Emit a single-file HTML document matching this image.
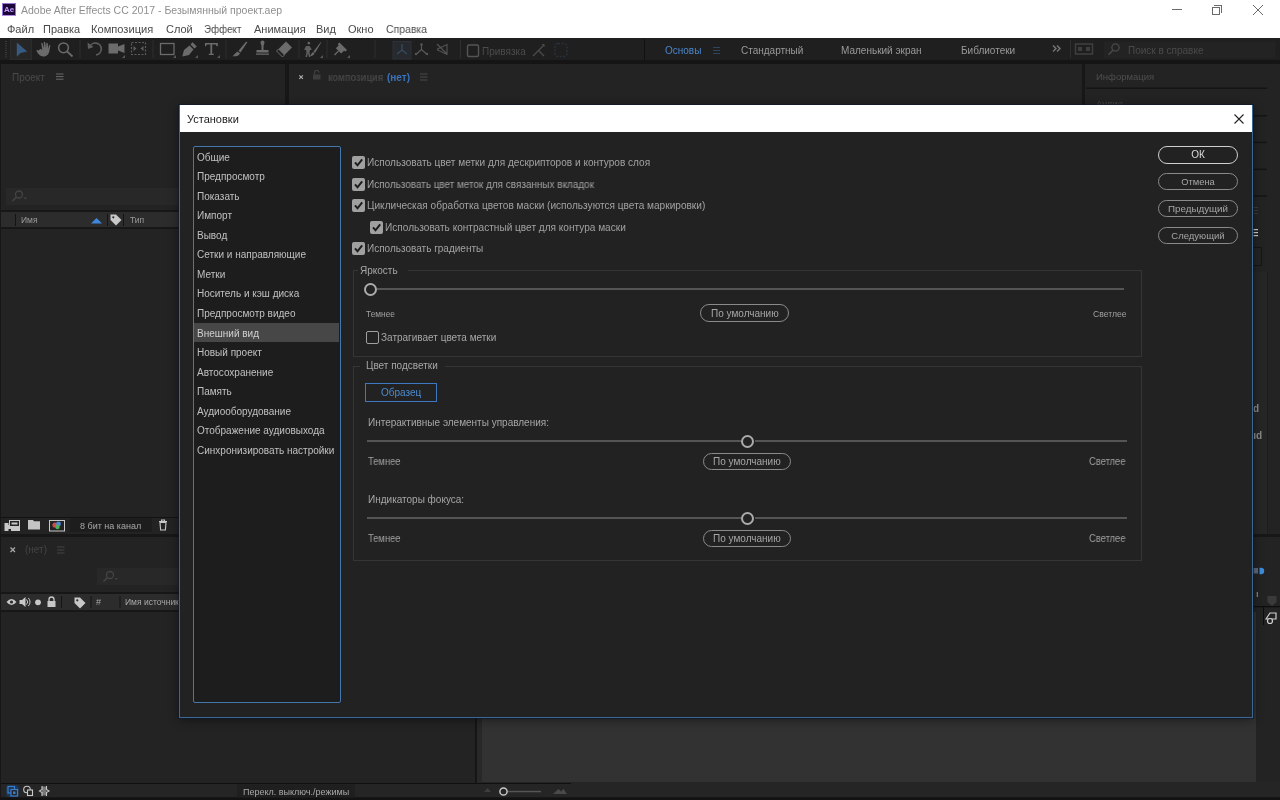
<!DOCTYPE html>
<html><head><meta charset="utf-8">
<style>
*{margin:0;padding:0;box-sizing:border-box}
html,body{width:1280px;height:800px;overflow:hidden;background:#171717;font-family:"Liberation Sans",sans-serif;font-size:10px;color:#a0a0a0;position:relative}
.a{position:absolute}
.t{position:absolute;white-space:nowrap;line-height:1;will-change:transform}
svg{position:absolute;overflow:visible}
</style></head><body>
<div class="a" style="left:0px;top:0px;width:1280px;height:38px;background:#fff;"></div>
<div class="a" style="left:2px;top:2.5px;width:13.5px;height:13.5px;background:#1c0838;border:1px solid #9a74d4;border-bottom:1.5px solid #b48ae8"></div>
<div class="t" style="left:4.3px;top:6.43px;font-size:8px;color:#c49cff;"><b>Ae</b></div>
<div class="t" style="left:21px;top:5.31px;font-size:10.5px;color:#8f8f8f;">Adobe After Effects CC 2017 - Безымянный проект.aep</div>
<div class="a" style="left:1172px;top:9px;width:10px;height:1px;background:#6a6a6a;"></div>
<div class="a" style="left:1212px;top:7px;width:8px;height:8px;background:transparent;border:1px solid #6a6a6a"></div>
<div class="a" style="left:1214px;top:5px;width:8px;height:8px;border-top:1px solid #6a6a6a;border-right:1px solid #6a6a6a"></div>
<svg style="left:1253px;top:5px" width="10" height="10"><path d="M0 0L10 10M10 0L0 10" stroke="#6a6a6a" stroke-width="1"/></svg>
<div class="t" style="left:7px;top:24.09px;font-size:11px;color:#4a4a4a;transform:scaleX(1);transform-origin:0 0">Файл</div>
<div class="t" style="left:43px;top:24.09px;font-size:11px;color:#4a4a4a;transform:scaleX(1);transform-origin:0 0">Правка</div>
<div class="t" style="left:91px;top:24.09px;font-size:11px;color:#4a4a4a;transform:scaleX(1.01);transform-origin:0 0">Композиция</div>
<div class="t" style="left:166px;top:24.09px;font-size:11px;color:#4a4a4a;transform:scaleX(1);transform-origin:0 0">Слой</div>
<div class="t" style="left:203.7px;top:24.09px;font-size:11px;color:#4a4a4a;transform:scaleX(0.89);transform-origin:0 0">Эффект</div>
<div class="t" style="left:254px;top:24.09px;font-size:11px;color:#4a4a4a;transform:scaleX(1);transform-origin:0 0">Анимация</div>
<div class="t" style="left:316px;top:24.09px;font-size:11px;color:#4a4a4a;transform:scaleX(1);transform-origin:0 0">Вид</div>
<div class="t" style="left:348px;top:24.09px;font-size:11px;color:#4a4a4a;transform:scaleX(1);transform-origin:0 0">Окно</div>
<div class="t" style="left:386px;top:24.09px;font-size:11px;color:#4a4a4a;transform:scaleX(0.95);transform-origin:0 0">Справка</div>
<div class="a" style="left:0px;top:38px;width:1280px;height:22px;background:#1f1f1f;"></div>
<div class="a" style="left:0px;top:60px;width:1280px;height:4px;background:#151515;"></div>
<div class="a" style="left:1px;top:64px;width:284px;height:453px;background:#232323;"></div>
<div class="a" style="left:289px;top:64px;width:793px;height:470px;background:#232323;"></div>
<div class="a" style="left:1085px;top:64px;width:195px;height:470px;background:#232323;"></div>
<div class="a" style="left:1px;top:517px;width:284px;height:1px;background:#111;"></div>
<div class="a" style="left:1px;top:518px;width:284px;height:16px;background:#232323;"></div>
<div class="a" style="left:1px;top:537px;width:1279px;height:246px;background:#232323;"></div>
<div class="a" style="left:1px;top:783px;width:570px;height:1px;background:#111;"></div>
<div class="a" style="left:1px;top:784px;width:1279px;height:13px;background:#252525;"></div>
<div class="a" style="left:571px;top:782px;width:709px;height:2px;background:#252525;"></div>
<div class="t" style="left:11.7px;top:72.53px;font-size:10px;color:#4a4a4a;">Проект</div>
<svg style="left:0;top:0" width="1280" height="800"><rect x="5" y="41.0" width="2" height="1" fill="#3a3a3a"/><rect x="5" y="43.2" width="2" height="1" fill="#3a3a3a"/><rect x="5" y="45.4" width="2" height="1" fill="#3a3a3a"/><rect x="5" y="47.6" width="2" height="1" fill="#3a3a3a"/><rect x="5" y="49.8" width="2" height="1" fill="#3a3a3a"/><rect x="5" y="52.0" width="2" height="1" fill="#3a3a3a"/><rect x="5" y="54.2" width="2" height="1" fill="#3a3a3a"/><rect x="5" y="56.4" width="2" height="1" fill="#3a3a3a"/><rect x="10.5" y="39.5" width="21" height="20" fill="#262626" stroke="#2c2c2c" stroke-width="1"/><path d="M16.8 42.5L16.8 56.8L20.5 53L27.2 51.6Z" fill="#365a80" stroke="none" stroke-width="1" /><path d="M38.5 50.5C37.5 49.5 36.2 49.8 36.6 51C37.8 53.5 40 56.5 43.5 56.5C47 56.5 49 54 49.5 50.5L50.3 46C50.5 45 49.4 44.8 49 45.6L48.2 48.8L47.8 43.5C47.7 42.5 46.4 42.5 46.3 43.5L46 48.3L45.2 42.3C45 41.3 43.7 41.5 43.8 42.5L44 48.3L42.6 43.3C42.3 42.4 41 42.6 41.3 43.6L42.3 50L40.5 48.8Z" fill="#6b6b6b" stroke="none" stroke-width="1" /><circle cx="63.5" cy="47.8" r="4.9" fill="none" stroke="#6b6b6b" stroke-width="1.5"/><path d="M67 51.3L72.5 56.5" fill="none" stroke="#6b6b6b" stroke-width="1.8" /><rect x="79.5" y="40" width="1" height="18" fill="#2e2e2e"/><path d="M89.5 47.5A6 6 0 1 1 96 55" fill="none" stroke="#5e5e5e" stroke-width="1.6" /><path d="M87.5 42.5L88 49L93.5 47Z" fill="#5e5e5e" stroke="none" stroke-width="1" /><path d="M108.5 43.5h9.5v10h-9.5z" fill="#6b6b6b" stroke="none" stroke-width="1" /><path d="M118 46.5L124.5 44V53L118 50.5Z" fill="#6b6b6b" stroke="none" stroke-width="1" /><path d="M122 58L125 58L125 55Z" fill="#5a5a5a" stroke="none" stroke-width="1" /><rect x="131.5" y="42.5" width="14" height="12" fill="none" stroke="#5e5e5e" stroke-width="1.2" stroke-dasharray="2 1.5"/><path d="M133.5 46v5l3-2.5z M143.5 46v5l-3-2.5z" fill="#5e5e5e" stroke="none" stroke-width="1" /><rect x="152.5" y="40" width="1" height="18" fill="#2e2e2e"/><rect x="160.5" y="43.5" width="13.5" height="11" fill="none" stroke="#6b6b6b" stroke-width="1.3"/><path d="M173 58L176 58L176 55Z" fill="#5a5a5a" stroke="none" stroke-width="1" /><path d="M182.5 55.5L184 50L189.5 45.5L193.5 49.5L189 55L182.5 56.5Z M190.5 44.5L192.5 42.3L196.8 46.5L194.5 48.5Z" fill="#6b6b6b" stroke="none" stroke-width="1" /><path d="M195 58L198 58L198 55Z" fill="#5a5a5a" stroke="none" stroke-width="1" /><path d="M205 43h12.8v3.2h-1.2l-.8-1.7h-3.6v9.2h1.6v1.2h-5v-1.2h1.6v-9.2h-3.6l-.8 1.7H205z" fill="#6b6b6b" stroke="none" stroke-width="1" /><path d="M217 58L220 58L220 55Z" fill="#5a5a5a" stroke="none" stroke-width="1" /><rect x="225.5" y="40" width="1" height="18" fill="#2e2e2e"/><path d="M247.5 42L246 41.8L238.5 50.8L240.5 52.5Z M237.8 51.5L240 53.5C239 56 236 56.5 232.5 56.2C234.5 55 235.3 52.5 237.8 51.5Z" fill="#6b6b6b" stroke="none" stroke-width="1" /><path d="M260.5 42.5a2 2 0 0 1 4 0c0 1.5 -1 2 -1 4v3.5h5v2.5h-12v-2.5h5v-3.5c0-2 -1-2.5 -1-4z M256 53.5h13v1.2h-13z" fill="#6b6b6b" stroke="none" stroke-width="1" /><path d="M286 41.5L292 47.5L284.5 55L278.5 49Z" fill="#6b6b6b" stroke="none" stroke-width="1" /><path d="M278.5 49L284.5 55L282.5 57L276.5 51Z" fill="none" stroke="#6b6b6b" stroke-width="1" /><rect x="298.5" y="40" width="1" height="18" fill="#2e2e2e"/><path d="M307.5 43a1.3 1.3 0 1 1 0 .1z" fill="#6b6b6b" stroke="none" stroke-width="1" /><path d="M306 46h3.5l2 3v1h-1.5l-.5 2l1 5h-1.5l-1-4l-1 4h-1.5l1-5l-.5-2h-1.5v-1z" fill="#5e5e5e" stroke="none" stroke-width="1" /><path d="M321.5 42L320.5 42.5L313.5 51.5L315 53Z M313 52L314.5 53.5C313.5 55.5 311.8 56 310 56C311 55 311.5 53 313 52Z" fill="#6b6b6b" stroke="none" stroke-width="1" /><path d="M320 58L323 58L323 55Z" fill="#5a5a5a" stroke="none" stroke-width="1" /><rect x="326.5" y="40" width="1" height="18" fill="#2e2e2e"/><path d="M339.5 42.5L347 50L345.5 51.5L344 50.8L341.2 53.6L335.8 48.2L338.6 45.4L337.9 43.9Z" fill="#6b6b6b" stroke="none" stroke-width="1" /><path d="M338.5 51L334.5 55" fill="none" stroke="#6b6b6b" stroke-width="1.3" /><path d="M347 58L350 58L350 55Z" fill="#5a5a5a" stroke="none" stroke-width="1" /><rect x="374.5" y="40" width="1" height="18" fill="#2e2e2e"/><rect x="393" y="41.5" width="18" height="17.5" fill="#262a2f" stroke="#2d3138" stroke-width="1"/><path d="M402 44v6M402 50l-5 4M402 50l5 4" fill="none" stroke="#3a4a60" stroke-width="1.3" /><path d="M421.5 44.5v5M421.5 49.5l-5 4.5M421.5 49.5l5 4.5" fill="none" stroke="#585858" stroke-width="1.2" /><circle cx="421.5" cy="44.5" r="1.2" fill="#585858"/><circle cx="416" cy="54" r="1.2" fill="#585858"/><circle cx="427" cy="54" r="1.2" fill="#585858"/><path d="M437.5 49L447 44.5V54.5L437.5 50Z M437 44L447 54" fill="none" stroke="#555" stroke-width="1.1" /><rect x="460" y="40" width="1" height="18" fill="#2e2e2e"/><rect x="467.5" y="45" width="11" height="11.5" rx="1.5" fill="none" stroke="#555" stroke-width="1.4"/><path d="M533 56L538.5 50.5L544 56 M537.5 51.5L544 45" fill="none" stroke="#4a4a4a" stroke-width="1.4" /><path d="M541.5 44L544.5 44L544.5 47Z" fill="#4a4a4a" stroke="none" stroke-width="1" /><rect x="555" y="43.5" width="12" height="13" rx="3" fill="none" stroke="#28323d" stroke-width="1.5" stroke-dasharray="2 1.5"/><rect x="644" y="39" width="1" height="22" fill="#121212"/><path d="M1053 45.5l3 3-3 3M1057 45.5l3 3-3 3" fill="none" stroke="#777" stroke-width="1.4" /><rect x="1070" y="40" width="1" height="18" fill="#2e2e2e"/><rect x="1075.5" y="44" width="17" height="10" fill="none" stroke="#3e3e3e" stroke-width="1.6"/><rect x="1078" y="47" width="4" height="4" fill="#3e3e3e"/><rect x="1086" y="47" width="4" height="4" fill="#3e3e3e"/><rect x="1104" y="41.5" width="171.5" height="16.5" fill="#232323"/><circle cx="1115.5" cy="47.5" r="3.6" fill="none" stroke="#4a4a4a" stroke-width="1.3"/><path d="M1113 50.3L1108.5 54.8" fill="none" stroke="#4a4a4a" stroke-width="1.5" /><rect x="56" y="73.5" width="7.5" height="1" fill="#6a6a6a"/><rect x="56" y="76.1" width="7.5" height="1" fill="#6a6a6a"/><rect x="56" y="78.7" width="7.5" height="1" fill="#6a6a6a"/><rect x="6" y="188" width="279" height="17" fill="#282828"/><circle cx="19" cy="194.5" r="3.5" fill="none" stroke="#444" stroke-width="1.3"/><path d="M16.5 197L12.5 201" fill="none" stroke="#444" stroke-width="1.5" /><path d="M23.5 197.5h3.5l-1.75 2z" fill="#444" stroke="none" stroke-width="1" /><rect x="1" y="210" width="284" height="2" fill="#171717"/><rect x="1" y="212" width="284" height="15" fill="#2c2c2c"/><rect x="1" y="227" width="284" height="2" fill="#171717"/><rect x="15" y="214" width="1" height="12" fill="#141414"/><rect x="107" y="214" width="1" height="12" fill="#141414"/><rect x="123" y="214" width="1" height="12" fill="#141414"/><path d="M91 223.5L96.5 218L102 223.5Z" fill="#3d88dc" stroke="none" stroke-width="1" /><path d="M110.5 214.5h5.5l5.5 5.5-5.5 5.5-5.5-5.5z" fill="#c8c8c8" stroke="none" stroke-width="1" /><circle cx="113.3" cy="217.3" r="1.1" fill="#2c2c2c"/><rect x="1" y="517" width="284" height="1" fill="#131313"/><rect x="1" y="534" width="1279" height="3" fill="#171717"/><path d="M4.5 523h4v8h-4z M6 525h14v6h-9v-2h-5z" fill="#c8c8c8" stroke="none" stroke-width="1" /><rect x="9.5" y="520.5" width="10" height="6" fill="#232323" stroke="#c8c8c8" stroke-width="1"/><rect x="11.5" y="522.5" width="6" height="2" fill="#c8c8c8"/><path d="M28 520h5l1 1.3h6v8.2H28z" fill="#c4c4c4" stroke="none" stroke-width="1" /><rect x="49.5" y="520.5" width="15" height="10.5" fill="#222" stroke="#c8c8c8" stroke-width="1"/><circle cx="55" cy="525" r="2.6" fill="#d34a4a"/><circle cx="58.5" cy="524" r="2.4" fill="#4a8ad4"/><circle cx="57.5" cy="527" r="2.2" fill="#4ab05a"/><rect x="70" y="518.5" width="82" height="13.5" fill="#1d1d1d"/><path d="M159 521.5h8M161.5 521.5v-1.5h3v1.5M160 522.5h6l-.6 7.5h-4.8z" fill="none" stroke="#c8c8c8" stroke-width="1.1" /><path d="M299.3 75.3l3.6 3.6M302.9 75.3l-3.6 3.6" fill="none" stroke="#b0b0b0" stroke-width="1.1" /><rect x="313" y="74.5" width="7.5" height="5" fill="#3d3d3d"/><path d="M314.5 74.5v-2a2.2 2.2 0 0 1 4.4 0" fill="none" stroke="#3d3d3d" stroke-width="1.3" /><rect x="420" y="73.5" width="7.5" height="1" fill="#4a4a4a"/><rect x="420" y="76.5" width="7.5" height="1" fill="#4a4a4a"/><rect x="420" y="79.5" width="7.5" height="1" fill="#4a4a4a"/><rect x="1086" y="87.5" width="181" height="1.5" fill="#141414"/><rect x="1253" y="115" width="14" height="1.5" fill="#141414"/><rect x="1253" y="141.7" width="14" height="1.5" fill="#141414"/><rect x="1253" y="168.6" width="14" height="1.5" fill="#141414"/><rect x="1253" y="195.3" width="14" height="1.5" fill="#141414"/><rect x="1253" y="207" width="5" height="1" fill="#3a3a3a"/><rect x="1253" y="210" width="5" height="1" fill="#3a3a3a"/><rect x="1253" y="213" width="5" height="1" fill="#3a3a3a"/><rect x="1253" y="229" width="5" height="1.2" fill="#cfcfcf"/><rect x="1253" y="232" width="5" height="1.2" fill="#cfcfcf"/><rect x="1253" y="235" width="5" height="1.2" fill="#cfcfcf"/><rect x="1252.5" y="247.5" width="9" height="18" fill="none" stroke="#151515" stroke-width="1"/><rect x="1253" y="272" width="14" height="262" fill="#262626"/><rect x="1267" y="272" width="1" height="262" fill="#1c1c1c"/><path d="M10.5 547.5l4.5 4.5M15 547.5l-4.5 4.5" fill="none" stroke="#a8a8a8" stroke-width="1.3" /><rect x="57" y="546.5" width="7.5" height="1" fill="#444"/><rect x="57" y="549.5" width="7.5" height="1" fill="#444"/><rect x="57" y="552.5" width="7.5" height="1" fill="#444"/><rect x="97" y="568" width="382" height="17" fill="#282828"/><circle cx="110" cy="575" r="3.5" fill="none" stroke="#444" stroke-width="1.3"/><path d="M107.5 577.5L103.5 581.5" fill="none" stroke="#444" stroke-width="1.5" /><path d="M114.5 578h3.5l-1.75 2z" fill="#444" stroke="none" stroke-width="1" /><rect x="1" y="592" width="474" height="2" fill="#171717"/><rect x="1" y="594" width="474" height="16" fill="#2c2c2c"/><rect x="1" y="610" width="474" height="2" fill="#171717"/><rect x="61" y="596" width="1" height="12" fill="#141414"/><rect x="90.5" y="596" width="1" height="12" fill="#141414"/><rect x="119.5" y="596" width="1" height="12" fill="#141414"/><path d="M6.5 602Q11.5 596 16.5 602Q11.5 608 6.5 602Z" fill="#c8c8c8" stroke="none" stroke-width="1" /><circle cx="11.5" cy="602" r="1.6" fill="#2c2c2c"/><path d="M19.5 600h2.5l3.5-3v10l-3.5-3h-2.5z" fill="#c8c8c8" stroke="none" stroke-width="1" /><path d="M26.5 599.5a3.5 3.5 0 0 1 0 5M28.3 598a5.5 5.5 0 0 1 0 8" fill="none" stroke="#c8c8c8" stroke-width="1" /><circle cx="38" cy="602.3" r="2.9" fill="#c8c8c8"/><rect x="47.5" y="601" width="8" height="6" fill="#c8c8c8"/><path d="M49 601v-1.5a2.5 2.5 0 0 1 5 0v1.5" fill="none" stroke="#c8c8c8" stroke-width="1.3" /><path d="M74.5 597.5h5.5l5.5 5.5-5.5 5.5-5.5-5.5z" fill="#c8c8c8" stroke="none" stroke-width="1" /><circle cx="77.3" cy="600.3" r="1.1" fill="#2c2c2c"/><rect x="475" y="612" width="2" height="171" fill="#161616"/><rect x="477" y="612" width="5" height="171" fill="#282828"/><rect x="482" y="612" width="774" height="170" fill="#323232"/><rect x="1" y="783" width="570" height="1" fill="#101010"/><rect x="0" y="798" width="1280" height="2" fill="#121212"/><rect x="6" y="785" width="13" height="12" rx="3" fill="#1f3550"/><rect x="8" y="786.5" width="6.5" height="6.5" fill="none" stroke="#3a7ccc" stroke-width="1.2"/><rect x="11" y="789.5" width="6.5" height="6.5" fill="#252525" stroke="#3a7ccc" stroke-width="1.2"/><rect x="13" y="791.5" width="2.5" height="2.5" fill="#3a7ccc"/><circle cx="27" cy="789.5" r="3.3" fill="none" stroke="#c8c8c8" stroke-width="1.1"/><rect x="27.5" y="790" width="5" height="5.5" fill="#252525" stroke="#c8c8c8" stroke-width="1.1"/><rect x="42" y="786.5" width="4.5" height="9" fill="#777"/><path d="M42 786v3.5l-2.5 1.5 2.5 1.5v3.5M46.5 786v3.5l2.5 1.5-2.5 1.5v3.5" fill="none" stroke="#c8c8c8" stroke-width="1.1" /><rect x="237" y="784.5" width="118" height="13" fill="#1f1f1f"/><path d="M484 792l3.5-4 3.5 4z" fill="#3e3e3e" stroke="none" stroke-width="1" /><circle cx="503.5" cy="791.5" r="3.6" fill="none" stroke="#c8c8c8" stroke-width="1.5"/><rect x="508" y="790.8" width="33" height="1.5" fill="#555"/><path d="M553 794l5.5-5 2.5 2.5 2.5-2.5 3.5 5z" fill="#4a4a4a" stroke="none" stroke-width="1" /><rect x="1253" y="568" width="5" height="5.5" fill="#5a6a80"/><path d="M1259.5 567.8h1.5a3.2 3.2 0 0 1 0 6.4h-1.5z" fill="#3b8de0" stroke="none" stroke-width="1" /><rect x="1256.8" y="592" width="0.8" height="5" fill="#bbb"/><path d="M1267.5 596h9v6l-4.5 4-4.5-4z" fill="#3a3a3a" stroke="none" stroke-width="1" /><rect x="1253" y="606" width="27" height="1.3" fill="#0e0e0e"/><rect x="1263" y="607" width="1" height="18" fill="#0e0e0e"/><path d="M1266 619l4-6h6v6z" fill="none" stroke="#d0d0d0" stroke-width="1.2" /><circle cx="1270" cy="621" r="2.5" fill="#232323" stroke="#d0d0d0" stroke-width="1.2"/></svg>
<div class="t" style="left:482px;top:46.73px;font-size:10px;color:#4c4c4c;">Привязка</div>
<div class="t" style="left:665px;top:45.94px;font-size:10px;color:#4a86cc;">Основы</div>
<div class="a" style="left:713px;top:47px;width:7px;height:1px;background:#2e4560;"></div>
<div class="a" style="left:713px;top:50px;width:7px;height:1px;background:#2e4560;"></div>
<div class="a" style="left:713px;top:53px;width:7px;height:1px;background:#2e4560;"></div>
<div class="t" style="left:741px;top:45.94px;font-size:10px;color:#9a9a9a;">Стандартный</div>
<div class="t" style="left:841px;top:45.94px;font-size:10px;color:#9a9a9a;">Маленький экран</div>
<div class="t" style="left:961px;top:45.94px;font-size:10px;color:#9a9a9a;">Библиотеки</div>
<div class="t" style="left:1128px;top:45.94px;font-size:10px;color:#4a4a4a;">Поиск в справке</div>
<div class="t" style="left:1096px;top:71.66px;font-size:9.5px;color:#4e4e4e;">Информация</div>
<div class="t" style="left:1096px;top:98.96px;font-size:9.5px;color:#4a4a4a;">Аудио</div>
<div class="t" style="left:20.5px;top:215.70px;font-size:8.5px;color:#9a9a9a;">Имя</div>
<div class="t" style="left:130px;top:215.70px;font-size:8.5px;color:#9a9a9a;">Тип</div>
<div class="t" style="left:327.5px;top:72.53px;font-size:10px;color:#454545;transform:scaleX(0.925);transform-origin:0 0"><b>композиция</b></div>
<div class="t" style="left:387px;top:72.53px;font-size:10px;color:#3a72b8;"><b>(нет)</b></div>
<div class="t" style="left:80px;top:521.58px;font-size:9px;color:#a8a8a8;">8 бит на канал</div>
<div class="t" style="left:24.6px;top:545.13px;font-size:10px;color:#444;">(нет)</div>
<div class="t" style="left:96px;top:597.98px;font-size:9px;color:#a8a8a8;">#</div>
<div class="t" style="left:124.9px;top:597.90px;font-size:8.5px;color:#a8a8a8;">Имя источника</div>
<div class="t" style="left:243px;top:788.18px;font-size:9px;color:#a8a8a8;">Перекл. выключ./режимы</div>
<div class="t" style="left:1253px;top:403.54px;font-size:10px;color:#8a8a8a;"><b>d</b></div>
<div class="t" style="left:1249.5px;top:430.54px;font-size:10px;color:#8a8a8a;"><b>ud</b></div>
<div class="a" style="left:179px;top:105px;width:1074px;height:613px;border:1px solid #3a6794;border-top:none;background:#222222;box-shadow:0 0 0 1px rgba(10,25,45,0.6),0 2px 10px rgba(0,0,0,0.45)"></div>
<div class="a" style="left:180px;top:105px;width:1072px;height:27px;background:#ffffff"></div>
<div class="t" style="left:187px;top:113.69px;font-size:11px;color:#1a1a1a;">Установки</div>
<svg class="a" style="left:1233.5px;top:113.5px" width="10" height="10"><path d="M0.5 0.5L9.5 9.5M9.5 0.5L0.5 9.5" stroke="#222" stroke-width="1.1"/></svg>
<div class="a" style="left:193px;top:146px;width:148px;height:557px;border:1px solid #4477ae;border-radius:2px;background:#1d1d1d"></div>
<div class="a" style="left:194px;top:323px;width:145px;height:19px;background:#474747"></div>
<div class="t" style="left:196.8px;top:152.53px;font-size:10px;color:#c0c0c0;">Общие</div>
<div class="t" style="left:196.8px;top:172.09px;font-size:10px;color:#c0c0c0;">Предпросмотр</div>
<div class="t" style="left:196.8px;top:191.66px;font-size:10px;color:#c0c0c0;">Показать</div>
<div class="t" style="left:196.8px;top:211.22px;font-size:10px;color:#c0c0c0;">Импорт</div>
<div class="t" style="left:196.8px;top:230.78px;font-size:10px;color:#c0c0c0;">Вывод</div>
<div class="t" style="left:196.8px;top:250.34px;font-size:10px;color:#c0c0c0;">Сетки и направляющие</div>
<div class="t" style="left:196.8px;top:269.90px;font-size:10px;color:#c0c0c0;">Метки</div>
<div class="t" style="left:196.8px;top:289.45px;font-size:10px;color:#c0c0c0;">Носитель и кэш диска</div>
<div class="t" style="left:196.8px;top:309.02px;font-size:10px;color:#c0c0c0;">Предпросмотр видео</div>
<div class="t" style="left:196.8px;top:328.57px;font-size:10px;color:#d0d0d0;">Внешний вид</div>
<div class="t" style="left:196.8px;top:348.14px;font-size:10px;color:#c0c0c0;">Новый проект</div>
<div class="t" style="left:196.8px;top:367.69px;font-size:10px;color:#c0c0c0;">Автосохранение</div>
<div class="t" style="left:196.8px;top:387.25px;font-size:10px;color:#c0c0c0;">Память</div>
<div class="t" style="left:196.8px;top:406.81px;font-size:10px;color:#c0c0c0;">Аудиооборудование</div>
<div class="t" style="left:196.8px;top:426.38px;font-size:10px;color:#c0c0c0;">Отображение аудиовыхода</div>
<div class="t" style="left:196.8px;top:445.94px;font-size:10px;color:#c0c0c0;">Синхронизировать настройки</div>
<div class="a" style="left:352px;top:156px;width:13px;height:13px;border-radius:2px;background:#a0a0a0"></div>
<svg class="a" style="left:352px;top:156px" width="13" height="13"><path d="M3 6.4L5.5 9.3L10.2 3.4" fill="none" stroke="#1c1c1c" stroke-width="2"/></svg>
<div class="t" style="left:366.7px;top:158.03px;font-size:10px;color:#a2a2a2;transform:scaleX(1.007);transform-origin:0 0">Использовать цвет метки для дескрипторов и контуров слоя</div>
<div class="a" style="left:352px;top:177.7px;width:13px;height:13px;border-radius:2px;background:#a0a0a0"></div>
<svg class="a" style="left:352px;top:177.7px" width="13" height="13"><path d="M3 6.4L5.5 9.3L10.2 3.4" fill="none" stroke="#1c1c1c" stroke-width="2"/></svg>
<div class="t" style="left:366.7px;top:179.63px;font-size:10px;color:#a2a2a2;transform:scaleX(0.993);transform-origin:0 0">Использовать цвет меток для связанных вкладок</div>
<div class="a" style="left:352px;top:199.2px;width:13px;height:13px;border-radius:2px;background:#a0a0a0"></div>
<svg class="a" style="left:352px;top:199.2px" width="13" height="13"><path d="M3 6.4L5.5 9.3L10.2 3.4" fill="none" stroke="#1c1c1c" stroke-width="2"/></svg>
<div class="t" style="left:366.7px;top:201.23px;font-size:10px;color:#a2a2a2;transform:scaleX(1.009);transform-origin:0 0">Циклическая обработка цветов маски (используются цвета маркировки)</div>
<div class="a" style="left:370px;top:220.7px;width:13px;height:13px;border-radius:2px;background:#a0a0a0"></div>
<svg class="a" style="left:370px;top:220.7px" width="13" height="13"><path d="M3 6.4L5.5 9.3L10.2 3.4" fill="none" stroke="#1c1c1c" stroke-width="2"/></svg>
<div class="t" style="left:384.6px;top:222.63px;font-size:10px;color:#a2a2a2;transform:scaleX(1.008);transform-origin:0 0">Использовать контрастный цвет для контура маски</div>
<div class="a" style="left:352px;top:242.2px;width:13px;height:13px;border-radius:2px;background:#a0a0a0"></div>
<svg class="a" style="left:352px;top:242.2px" width="13" height="13"><path d="M3 6.4L5.5 9.3L10.2 3.4" fill="none" stroke="#1c1c1c" stroke-width="2"/></svg>
<div class="t" style="left:366.7px;top:244.03px;font-size:10px;color:#a2a2a2;transform:scaleX(1);transform-origin:0 0">Использовать градиенты</div>
<div class="a" style="left:353px;top:269.5px;width:789px;height:87px;border:1px solid #353535"></div>
<div class="a" style="left:358px;top:264px;width:50px;height:10px;background:#222"></div>
<div class="t" style="left:360px;top:265.54px;font-size:10px;color:#a6a6a6;">Яркость</div>
<div class="a" style="left:377px;top:288px;width:747px;height:2px;background:#555"></div>
<div class="a" style="left:364.3px;top:282.5px;width:13px;height:13px;border-radius:50%;border:2px solid #ababab"></div>
<div class="t" style="left:366px;top:309.79px;font-size:8.4px;color:#a0a0a0;">Темнее</div>
<div class="a" style="left:700px;top:304px;width:89px;height:18px;border-radius:9px;border:1.5px solid #8a8a8a"></div>
<div class="t" style="left:710.6px;top:308.84px;font-size:10px;color:#a6a6a6;">По умолчанию</div>
<div class="t" style="left:1093px;top:309.62px;font-size:8.6px;color:#a0a0a0;">Светлее</div>
<div class="a" style="left:365.5px;top:330.5px;width:13px;height:13px;border-radius:2px;border:1.5px solid #a0a0a0"></div>
<div class="t" style="left:380.6px;top:333.14px;font-size:10px;color:#a6a6a6;">Затрагивает цвета метки</div>
<div class="a" style="left:353px;top:365.5px;width:789px;height:195px;border:1px solid #353535"></div>
<div class="a" style="left:360px;top:360px;width:85px;height:10px;background:#222"></div>
<div class="t" style="left:365.6px;top:360.94px;font-size:10px;color:#a6a6a6;">Цвет подсветки</div>
<div class="a" style="left:365px;top:383px;width:72px;height:19px;border:1.5px solid #3d78c0"></div>
<div class="t" style="left:380.6px;top:388.44px;font-size:10px;color:#4d8ad0;">Образец</div>
<div class="t" style="left:367.5px;top:417.79px;font-size:10px;color:#a6a6a6;">Интерактивные элементы управления:</div>
<div class="a" style="left:367px;top:440px;width:373.5px;height:2px;background:#555"></div>
<div class="a" style="left:754.5px;top:440px;width:372.5px;height:2px;background:#555"></div>
<div class="a" style="left:741.0px;top:434.5px;width:13px;height:13px;border-radius:50%;border:2px solid #ababab"></div>
<div class="t" style="left:367.5px;top:456.84px;font-size:10px;color:#a0a0a0;transform:scaleX(0.94);transform-origin:0 0">Темнее</div>
<div class="a" style="left:703px;top:452.5px;width:88px;height:17.5px;border-radius:9px;border:1.5px solid #8a8a8a"></div>
<div class="t" style="left:713px;top:457.14px;font-size:10px;color:#a6a6a6;">По умолчанию</div>
<div class="t" style="left:1088.5px;top:456.84px;font-size:10px;color:#a0a0a0;transform:scaleX(0.935);transform-origin:0 0">Светлее</div>
<div class="t" style="left:367.5px;top:495.04px;font-size:10px;color:#a6a6a6;">Индикаторы фокуса:</div>
<div class="a" style="left:367px;top:517px;width:373.5px;height:2px;background:#555"></div>
<div class="a" style="left:754.5px;top:517px;width:372.5px;height:2px;background:#555"></div>
<div class="a" style="left:741.0px;top:511.5px;width:13px;height:13px;border-radius:50%;border:2px solid #ababab"></div>
<div class="t" style="left:367.5px;top:533.83px;font-size:10px;color:#a0a0a0;transform:scaleX(0.94);transform-origin:0 0">Темнее</div>
<div class="a" style="left:703px;top:529.5px;width:88px;height:17.5px;border-radius:9px;border:1.5px solid #8a8a8a"></div>
<div class="t" style="left:713px;top:534.13px;font-size:10px;color:#a6a6a6;">По умолчанию</div>
<div class="t" style="left:1088.5px;top:533.83px;font-size:10px;color:#a0a0a0;transform:scaleX(0.935);transform-origin:0 0">Светлее</div>
<div class="a" style="left:1158px;top:146px;width:80px;height:17.5px;border-radius:9px;border:1.5px solid #cfcfcf"></div>
<div class="t" style="left:1158px;width:80px;text-align:center;top:150.03px;font-size:10px;color:#dcdcdc">ОК</div>
<div class="a" style="left:1158px;top:172.5px;width:80px;height:17.5px;border-radius:9px;border:1.5px solid #8a8a8a"></div>
<div class="t" style="left:1158px;width:80px;text-align:center;top:177.04px;font-size:9.4px;color:#a6a6a6">Отмена</div>
<div class="a" style="left:1158px;top:199.5px;width:80px;height:17.5px;border-radius:9px;border:1.5px solid #8a8a8a"></div>
<div class="t" style="left:1158px;width:80px;text-align:center;top:203.70px;font-size:9.8px;color:#a6a6a6">Предыдущий</div>
<div class="a" style="left:1158px;top:226.5px;width:80px;height:17.5px;border-radius:9px;border:1.5px solid #8a8a8a"></div>
<div class="t" style="left:1158px;width:80px;text-align:center;top:230.96px;font-size:9.5px;color:#a6a6a6">Следующий</div>
</body></html>
